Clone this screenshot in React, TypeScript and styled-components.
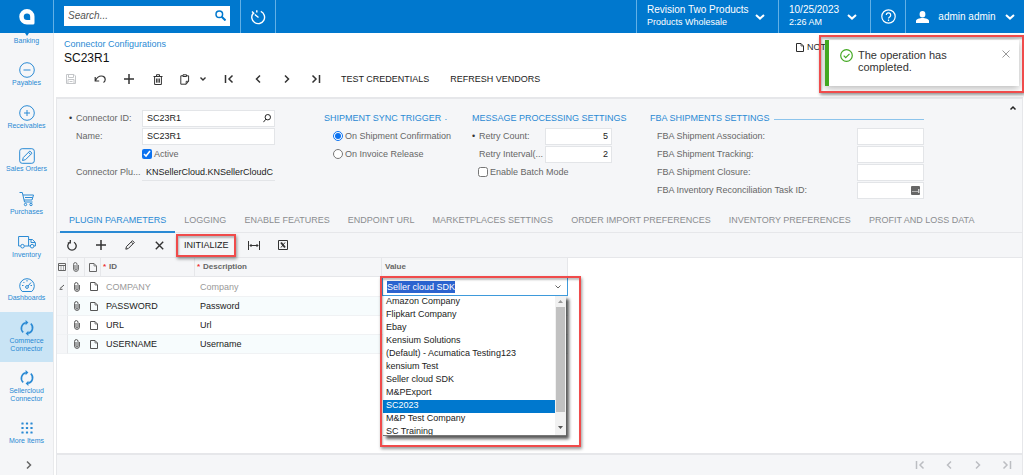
import React, { useEffect, useRef } from 'react';
import styled, { createGlobalStyle, css } from 'styled-components';

const blue = '#0078ce';
const linkBlue = '#2a8ad4';
const panelBg = '#f5f6f8';
const line = '#e6e7ea';

const GlobalStyle = createGlobalStyle`
  *, *::before, *::after { box-sizing: border-box; }
  body {
    margin: 0;
    background: #fff;
    color: #2b2b2b;
    font-family: "Liberation Sans", Arial, sans-serif;
    font-size: 9px;
    line-height: 12px;
  }
  button, input, select { font: inherit; color: inherit; margin: 0; }
  button { background: none; border: 0; padding: 0; cursor: pointer; }
  a { text-decoration: none; color: inherit; }
  h1, h2 { margin: 0; font-weight: 400; }
`;

/* ---------- icons ---------- */

const Svg = styled.svg<{ $w?: number }>`
  display: block;
  flex: none;
  fill: none;
  stroke: currentColor;
  stroke-width: ${(p) => p.$w ?? 1};
`;

type IconProps = { w: number; h?: number; sw?: number; children: React.ReactNode };
const Icon = ({ w, h = w, sw, children }: IconProps) => (
  <Svg width={w} height={h} viewBox={`0 0 ${w} ${h}`} $w={sw} aria-hidden="true">
    {children}
  </Svg>
);

const Down = () => <Icon w={10} h={6} sw={2}><path d="M1 1l4 3.6L9 1" /></Icon>;
const SmallDown = () => <Icon w={8} h={6} sw={1.4}><path d="M1.5 1.5L4 4l2.500-2.500" /></Icon>;
const Plus = () => <Icon w={12} sw={1.5}><path d="M6 1v10M1 6h10" /></Icon>;
const First = () => <Icon w={10} sw={1.5}><path d="M1.500 1v8M8.500 1.500L5 5l3.500 3.500" /></Icon>;
const Prev = () => <Icon w={10} sw={1.5}><path d="M7 1.500L3.500 5 7 8.500" /></Icon>;
const Next = () => <Icon w={10} sw={1.5}><path d="M3 1.500L6.500 5 3 8.500" /></Icon>;
const Last = () => <Icon w={10} sw={1.5}><path d="M8.500 1v8M1.500 1.500L5 5 1.500 8.500" /></Icon>;
const Page = () => <Icon w={8} h={9}><path d="M.5.5h4.500l2.500 2.500v5.500h-7z" /><path d="M5 .5V3h2.500" strokeWidth=".7" /></Icon>;
const Clip = () => (
  <Icon w={6} h={10}><path d="M2 3v4a1 1 0 0 0 2 0V2.300a1.700 1.700 0 0 0-3.400 0V7a2.400 2.400 0 0 0 4.800 0V3" /></Icon>
);
const Sync = () => (
  <Icon w={16} sw={1.6}>
    <path d="M4.200 12.300A5.600 5.600 0 0 1 6.800 2.700M11.800 3.700a5.600 5.600 0 0 1-2.600 9.600" />
    <path d="M6.600 0v5.200L9.400 2.600zM9.400 10.800V16l-2.800-2.600z" fill="currentColor" stroke="none" />
  </Icon>
);

/* ---------- top bar ---------- */

const Shell = styled.div`
  min-height: 100vh;
  display: flex;
  flex-direction: column;
`;

const TopBar = styled.header`
  display: flex;
  height: 33px;
  flex: none;
  background: ${blue};
  color: #fff;
`;

const divider = css`border-right: 1px solid #62b0e6;`;

const LogoLink = styled.a`
  ${divider}
  width: 54px;
  display: flex;
  align-items: center;
  justify-content: center;
`;

const SearchBox = styled.form`
  ${divider}
  width: 187px;
  display: flex;
  align-items: center;
  padding: 0 10px 2px;
`;

const SearchField = styled.div`
  flex: 1;
  height: 20px;
  display: flex;
  align-items: center;
  gap: 4px;
  padding: 0 4px 0 0;
  background: #fff;
  color: ${blue};
`;

const SearchInput = styled.input`
  flex: 1;
  min-width: 0;
  border: 0;
  outline: 0;
  padding: 0 0 0 4px;
  background: transparent;
  font-size: 10px;
  font-style: italic;
  &::placeholder { color: #555; opacity: 1; }
`;

const TopButton = styled.button<{ $width: number }>`
  width: ${(p) => p.$width}px;
  ${divider}
  display: flex;
  align-items: center;
  justify-content: center;
`;

const TopSpacer = styled.div`
  ${divider}
  flex: 1;
`;

const TopMenu = styled.button<{ $width: number; $last?: boolean }>`
  width: ${(p) => p.$width}px;
  ${(p) => !p.$last && divider}
  display: flex;
  align-items: center;
  justify-content: space-between;
  padding: 0 ${(p) => (p.$last ? 9 : 13)}px 0 10px;
  text-align: left;
  white-space: nowrap;
`;

const MenuMain = styled.span`
  display: block;
  font-size: 10px;
`;

const MenuSub = styled.span`
  display: block;
  font-size: 9px;
  padding-bottom: 2px;
`;

/* ---------- side navigation ---------- */

const Body = styled.div`
  flex: 1;
  display: flex;
`;

const SideNav = styled.nav`
  width: 54px;
  flex: none;
  display: flex;
  flex-direction: column;
  background: ${panelBg};
  border-right: 1px solid #e9eaec;
  color: ${linkBlue};
`;

const NavItem = styled.a<{ $active?: boolean; $clipped?: boolean }>`
  min-height: ${(p) => (p.$clipped ? 21 : 43)}px;
  padding: ${(p) => (p.$clipped ? '0' : '8px 5px 9px')};
  display: flex;
  flex-direction: column;
  align-items: center;
  gap: 1px;
  background: ${(p) => (p.$active ? '#c9e4f5' : 'transparent')};
  font-size: 7px;
  line-height: 8px;
  text-align: center;
`;

const NavExpand = styled.button`
  flex: 1;
  display: flex;
  align-items: center;
  justify-content: center;
  padding-left: 4px;
  color: #666;
`;

/* ---------- page ---------- */

const Main = styled.main`
  flex: 1;
  min-width: 0;
  display: flex;
  flex-direction: column;
  padding: 0 1px 0 2px;
`;

const PageHead = styled.div`
  display: flex;
  justify-content: space-between;
  padding: 5px 185px 0 8px;
`;

const Crumb = styled.a`
  display: block;
  color: ${linkBlue};
`;

const PageTitle = styled.h1`
  font-size: 12px;
  line-height: 16px;
  color: #111;
`;

const NoteLink = styled.button`
  display: flex;
  align-items: center;
  align-self: flex-start;
  gap: 3px;
  padding-top: 3px;
`;

const Toolbar = styled.div<{ $grid?: boolean }>`
  display: flex;
  align-items: center;
  gap: 15px;
  height: ${(p) => (p.$grid ? 25 : 26)}px;
  margin-bottom: ${(p) => (p.$grid ? 0 : 5)}px;
  padding-left: 8px;
  ${(p) => p.$grid && css`border-bottom: 1px solid ${line};`}
`;

const ToolButton = styled.button`
  min-width: 14px;
  height: 20px;
  display: flex;
  align-items: center;
  justify-content: center;
  gap: 9px;
  color: #333;
  &:disabled { color: #c4c6c9; cursor: default; }
`;

const TextButton = styled.button`
  position: relative;
  padding: 0 3px;
  height: 20px;
  color: #222;
  white-space: nowrap;
`;

const Highlight = styled.span<{ $inset: string }>`
  position: absolute;
  inset: ${(p) => p.$inset};
  border: 2px solid #f04b4b;
  box-shadow: 1px 2px 3px rgba(0, 0, 0, 0.4), inset 1px 2px 2px rgba(0, 0, 0, 0.25);
  pointer-events: none;
  z-index: 3;
`;

const Panel = styled.section`
  flex: 1;
  display: flex;
  flex-direction: column;
  border: solid ${line};
  border-width: 2px 1px 0 1px;
  background: ${panelBg};
`;

/* ---------- form ---------- */

const FormArea = styled.form`
  display: flex;
  justify-content: space-between;
  align-items: flex-start;
  padding: 0 5px 10px 12px;
`;

const FormColumns = styled.div`
  display: grid;
  grid-template-columns: 230px 123px 153px 274px;
  column-gap: 25px;
  padding-top: 10px;
  color: #666;
`;

const Row = styled.div<{ $indent?: number; $end?: number }>`
  height: 18px;
  display: flex;
  align-items: center;
  padding: 0 ${(p) => p.$end ?? 0}px 0 ${(p) => p.$indent ?? 0}px;
  white-space: nowrap;
`;

const GroupTitle = styled.h2`
  height: 18px;
  display: flex;
  align-items: center;
  gap: 4px;
  font-size: 9px;
  color: ${linkBlue};
  white-space: nowrap;
  &::after {
    content: '';
    flex: 1;
    height: 1px;
    margin-top: 2px;
    background: #8cc4ec;
  }
`;

const Label = styled.label<{ $required?: boolean }>`
  flex: 1;
  &::before {
    content: '${(p) => (p.$required ? '•' : '')}';
    display: inline-block;
    width: 7px;
    color: #333;
  }
`;

const Field = styled.div<{ $width: number; $plain?: boolean }>`
  width: ${(p) => p.$width}px;
  flex: none;
  height: 17px;
  display: flex;
  align-items: center;
  padding-right: ${(p) => (p.$plain ? 2 : 3)}px;
  border: solid #e3e5e8;
  border-width: ${(p) => (p.$plain ? '0 0 1px' : '1px')};
  background: ${(p) => (p.$plain ? 'transparent' : '#fff')};
  color: #222;
`;

const TextInput = styled.input`
  flex: 1;
  min-width: 0;
  height: 100%;
  border: 0;
  outline: 0;
  padding: 0 0 0 4px;
  background: transparent;
  text-align: ${(p) => (p.type === 'text' ? 'left' : 'right')};
`;

const Check = styled.label`
  display: flex;
  align-items: center;
  gap: 2px;
`;

const CheckInput = styled.input`
  width: 10px;
  height: 10px;
  accent-color: #0b72f0;
`;

const Collapse = styled.button`
  padding: 6px 0;
  color: #222;
`;

/* ---------- tabs ---------- */

const Tabs = styled.div`
  display: flex;
  height: 24px;
  padding-left: 3px;
  border-bottom: 1px solid ${line};
`;

const Tab = styled.button<{ $active?: boolean }>`
  padding: 0 9px;
  margin-bottom: -1px;
  border-bottom: 2px solid ${(p) => (p.$active ? linkBlue : 'transparent')};
  color: ${(p) => (p.$active ? linkBlue : '#8b8d90')};
  white-space: nowrap;
`;

/* ---------- grid ---------- */

const GridArea = styled.div`
  flex: 1;
  background: #fff;
`;

const Grid = styled.table`
  width: 511px;
  table-layout: fixed;
  border-collapse: separate;
  border-spacing: 0;
`;

const HeadCell = styled.th<{ $pad?: number; $required?: boolean }>`
  height: 19px;
  padding: 0 0 0 ${(p) => p.$pad ?? 4}px;
  border: solid ${line};
  border-width: 0 1px 1px 0;
  background: ${panelBg};
  color: #666;
  font-size: 8px;
  text-align: left;
  white-space: nowrap;
  ${(p) => p.$required && css`
    &::before { content: '*'; display: inline-block; width: 6px; color: #e33; }
  `}
`;

const Cell = styled.td<{ $pad?: number; $selector?: boolean; $alt?: boolean; $muted?: boolean }>`
  height: 19px;
  padding: 0 0 0 ${(p) => p.$pad ?? 5}px;
  border-bottom: 1px solid #f0f2f4;
  ${(p) => p.$selector && css`border-right: 1px solid ${line};`}
  background: ${(p) => (p.$selector ? panelBg : p.$alt ? '#f7fcfd' : '#fff')};
  color: ${(p) => (p.$muted ? '#999' : '#222')};
  & > svg { color: #555; }
`;

const Combo = styled.div`
  position: relative;
  height: 19px;
  display: flex;
  align-items: center;
  padding-right: 5px;
  border: 1px solid #3f9bdc;
  background: #fff;
  color: #666;
`;

const ComboInput = styled.input`
  flex: 1;
  min-width: 0;
  border: 0;
  outline: 0;
  padding: 0 0 0 4px;
  background: transparent;
  caret-color: transparent;
  &::selection { background: #2b63cf; color: #fff; }
`;

const Menu = styled.div`
  position: absolute;
  top: 18px;
  left: 0;
  right: 1px;
  height: 140px;
  display: flex;
  overflow: hidden;
  border-bottom: 1px solid #777;
  background: #fff;
  z-index: 2;
`;

const MenuShadow = styled.div`
  position: absolute;
  top: 20px;
  left: 2px;
  right: 1px;
  height: 138px;
  box-shadow: 2px 2px 3px 1px rgba(0, 0, 0, 0.65);
`;

const MenuList = styled.select`
  flex: 1;
  min-width: 0;
  border: 0;
  outline: 0;
  padding: 0;
  border-radius: 0;
  overflow: hidden;
  background: #fff;
  color: #222;
`;

const Option = styled.option`
  height: 13px;
  min-height: 13px;
  padding: 0 0 0 3px;
  line-height: 13px;
  &:checked {
    background: ${blue} linear-gradient(${blue}, ${blue});
    color: #fff;
    -webkit-text-fill-color: #fff;
  }
`;

const ScrollTrack = styled.div`
  width: 11px;
  display: flex;
  flex-direction: column;
  align-items: center;
  justify-content: space-between;
  padding: 4px 1px 6px;
  background: #f1f1f1;
  color: #555;
`;

const ScrollThumb = styled.div`
  width: 9px;
  height: 105px;
  margin-bottom: auto;
  margin-top: 4px;
  background: #c1c1c1;
`;

const Pager = styled.footer`
  height: 22px;
  display: flex;
  align-items: center;
  justify-content: flex-end;
  gap: 19px;
  padding-right: 10px;
  border-top: 2px solid ${line};
  & button { color: #bcbec2; }
`;

/* ---------- toast ---------- */

const ToastFrame = styled.div`
  position: absolute;
  top: 35px;
  right: 0;
  width: 205px;
  padding: 5px 5px 7px 6px;
  z-index: 5;
`;

const Toast = styled.div`
  display: flex;
  align-items: flex-start;
  gap: 5px;
  min-height: 46px;
  padding: 9px 9px 0 11px;
  border-left: 4px solid #43a822;
  background: #fff;
  box-shadow: 0 2px 8px rgba(0, 0, 0, 0.3);
  color: #333;
`;

const ToastText = styled.p`
  flex: 1;
  margin: 0;
  max-width: 100px;
  font-size: 11px;
  line-height: 12px;
`;

const ToastClose = styled.button`
  margin-left: auto;
  padding-top: 1px;
  color: #999;
`;

/* ---------- data ---------- */

const navItems: { label: string; icon: React.ReactNode; active?: boolean }[] = [
  { label: 'Payables', icon: <Icon w={16}><circle cx="8" cy="8" r="7.300" /><path d="M4.500 8h7" /></Icon> },
  { label: 'Receivables', icon: <Icon w={16}><circle cx="8" cy="8" r="7.300" /><path d="M5 8h6M8 5v6" /></Icon> },
  {
    label: 'Sales Orders',
    icon: (
      <Icon w={16}>
        <rect x=".7" y=".7" width="14.600" height="14.600" rx="2.500" />
        <path d="M3.500 12.500l.8-3 6.500-6.500 2.200 2.200-6.500 6.500zM9.500 4.300l2.200 2.200" />
      </Icon>
    ),
  },
  {
    label: 'Purchases',
    icon: (
      <Icon w={16}>
        <path d="M.5 1.500h2.800l2.200 9.500h8M4 4h10.500l-1.500 5H5M6 6.500h7.500" />
        <circle cx="6.500" cy="13.500" r="1.200" /><circle cx="12" cy="13.500" r="1.200" />
      </Icon>
    ),
  },
  {
    label: 'Inventory',
    icon: (
      <Icon w={18} h={16}>
        <path d="M2.500 12H.6V2.500h10V12H6.500M10.600 5.500h3.900l2.900 3V12h-1.500M12.300 12h-1.700M13 5.500v3h4" />
        <circle cx="4.500" cy="12.200" r="1.800" /><circle cx="14.100" cy="12.200" r="1.800" />
      </Icon>
    ),
  },
  {
    label: 'Dashboards',
    icon: (
      <Icon w={16}>
        <path d="M3.200 14.500a7.300 7.300 0 1 1 9.600 0zM3 8.500h1.500M8 3v1.500M4.400 5l1 1M11.500 8.500H13" />
        <circle cx="8" cy="10" r="1.400" /><path d="M9 9l3-3.500" />
      </Icon>
    ),
  },
  { label: 'Commerce Connector', icon: <Sync />, active: true },
  { label: 'Sellercloud Connector', icon: <Sync /> },
  {
    label: 'More Items',
    icon: (
      <Icon w={16}>
        {[3.5, 8, 12.5].map((y) => [3.5, 8, 12.5].map((x) => (
          <rect key={`${x}-${y}`} x={x - 1.1} y={y - 1.1} width="2.200" height="2.200" rx=".5" fill="currentColor" stroke="none" />
        )))}
      </Icon>
    ),
  },
];

const tabs = [
  'PLUGIN PARAMETERS', 'LOGGING', 'ENABLE FEATURES', 'ENDPOINT URL', 'MARKETPLACES SETTINGS',
  'ORDER IMPORT PREFERENCES', 'INVENTORY PREFERENCES', 'PROFIT AND LOSS DATA',
];

const rows = [
  ['COMPANY', 'Company'],
  ['PASSWORD', 'Password'],
  ['URL', 'Url'],
  ['USERNAME', 'Username'],
];

const companies = [
  'Amazon Company', 'Flipkart Company', 'Ebay', 'Kensium Solutions', '(Default) - Acumatica Testing123',
  'kensium Test', 'Seller cloud SDK', 'M&PExport', 'SC2023', 'M&P Test Company', 'SC Training',
];

const fbaFields = [
  'FBA Shipment Association:', 'FBA Shipment Tracking:', 'FBA Shipment Closure:', 'FBA Inventory Reconciliation Task ID:',
];

const pagerButtons = [
  { name: 'First page', icon: <First /> },
  { name: 'Previous page', icon: <Prev /> },
  { name: 'Next page', icon: <Next /> },
  { name: 'Last page', icon: <Last /> },
];

/* ---------- sections ---------- */

const Header = () => (
  <TopBar>
    <LogoLink href="#" aria-label="Home">
      <Icon w={16}>
        <path d="M8 0a7.500 7.500 0 0 1 7.500 7.500v6.500a1.500 1.500 0 0 1-1.500 1.500H8A7.750 7.750 0 0 1 8 0z" fill="#fff" stroke="none" />
        <path d="M8 4.500a3.200 3.200 0 0 1 3.200 3.200V11H8a3.250 3.250 0 0 1 0-6.500z" fill={blue} stroke="none" />
      </Icon>
    </LogoLink>
    <SearchBox>
      <SearchField>
        <SearchInput type="search" placeholder="Search..." aria-label="Search" />
        <button type="button" aria-label="Run search">
          <Icon w={11} sw={1.5}><circle cx="4.300" cy="4.300" r="3.300" /><path d="M6.700 6.700l3.800 3.800" strokeWidth="2" /></Icon>
        </button>
      </SearchField>
    </SearchBox>
    <TopButton $width={35} aria-label="Recent">
      <Icon w={16} sw={1.4}><path d="M10.800 2.400A6.400 6.400 0 1 1 3.200 4.200M2 2.500l2.200 2.200M6.800 1.200v2.200M4.800 5.500L8.500 8.500" /></Icon>
    </TopButton>
    <TopSpacer />
    <TopMenu $width={142}>
      <span><MenuMain>Revision Two Products</MenuMain><MenuSub>Products Wholesale</MenuSub></span>
      <Down />
    </TopMenu>
    <TopMenu $width={92}>
      <span><MenuMain>10/25/2023</MenuMain><MenuSub>2:26 AM</MenuSub></span>
      <Down />
    </TopMenu>
    <TopButton $width={35} aria-label="Help">
      <Icon w={15} sw={1.2}>
        <circle cx="7.500" cy="7.500" r="6.700" />
        <path d="M5.300 6a2.200 2.200 0 1 1 3.400 1.900c-.8.5-1.200.8-1.200 1.700M7.500 10.600v1.400" />
      </Icon>
    </TopButton>
    <TopMenu $width={118} $last>
      <Icon w={13} h={12}>
        <path d="M6.500 0a2.900 3.200 0 0 1 0 6.400A2.900 3.200 0 0 1 6.500 0zM0 12V10c0-1.800 3.500-3 6.500-3S13 8.200 13 10v2z" fill="#fff" stroke="none" />
      </Icon>
      <MenuMain>admin admin</MenuMain>
      <Down />
    </TopMenu>
  </TopBar>
);

const Navigation = () => (
  <SideNav aria-label="Workspaces">
    <NavItem href="#" $clipped>
      <Icon w={4} h={3}><path d="M0 0h4L2 3z" fill={blue} stroke="none" /></Icon>
      Banking
    </NavItem>
    {navItems.map((n) => (
      <NavItem key={n.label} href="#" $active={n.active}>
        {n.icon}
        {n.label}
      </NavItem>
    ))}
    <NavExpand aria-label="Expand menu"><Next /></NavExpand>
  </SideNav>
);

const MainToolbar = () => (
  <Toolbar>
    <ToolButton disabled aria-label="Save">
      <Icon w={10}><path d="M.5.5h7.500l1.500 1.500v7.500h-9zM2.500.5v3h5v-3M2 9.500v-4h6v4M3.500 7.500h3" /></Icon>
    </ToolButton>
    <ToolButton aria-label="Undo">
      <Icon w={12} h={10} sw={1.2}><path d="M1.200 3v4h4M1.500 6.500C3 3.500 5 2 7.200 2c2.500 0 4 1.500 4 3.500 0 1.300-.6 2.300-1.700 3" /></Icon>
    </ToolButton>
    <ToolButton aria-label="Add"><Plus /></ToolButton>
    <ToolButton aria-label="Delete">
      <Icon w={10} h={11}><path d="M.5 2.500h9M3.500 2.300V.7h3v1.600M1.600 2.500v8h6.800v-8M3.600 4.500v4.200M5 4.500v4.200M6.400 4.500v4.200" /></Icon>
    </ToolButton>
    <ToolButton aria-label="Copy and paste">
      <Icon w={10} h={11}><path d="M3 1.800H.8v8.400h5.400l2.400-2.900V1.800H6.500M3 .8h3.500v1.700H3zM8.600 7.300H6.200v2.900" /></Icon>
      <SmallDown />
    </ToolButton>
    {pagerButtons.map((b) => <ToolButton key={b.name} aria-label={b.name}>{b.icon}</ToolButton>)}
    <TextButton>TEST CREDENTIALS</TextButton>
    <TextButton>REFRESH VENDORS</TextButton>
  </Toolbar>
);

const SettingsForm = () => (
  <FormArea>
    <FormColumns>
      <div>
        <Row $end={24}>
          <Label htmlFor="cid" $required>Connector ID:</Label>
          <Field $width={133}>
            <TextInput id="cid" type="text" defaultValue="SC23R1" />
            <button type="button" aria-label="Look up connector">
              <Icon w={8} h={9}><circle cx="4.800" cy="3.200" r="2.700" /><path d="M2.900 5.200L.4 8.200" /></Icon>
            </button>
          </Field>
        </Row>
        <Row $end={24}>
          <Label htmlFor="cname">Name:</Label>
          <Field $width={133}><TextInput id="cname" type="text" defaultValue="SC23R1" /></Field>
        </Row>
        <Row $indent={73}>
          <Check><CheckInput type="checkbox" defaultChecked />Active</Check>
        </Row>
        <Row $end={24}>
          <Label htmlFor="plug">Connector Plu...</Label>
          <Field $width={133} $plain>
            <TextInput id="plug" type="text" readOnly value="KNSellerCloud.KNSellerCloudConnector" />
          </Field>
        </Row>
      </div>
      <div>
        <GroupTitle>SHIPMENT SYNC TRIGGER</GroupTitle>
        <Row $indent={9}>
          <Check><CheckInput type="radio" name="sync" defaultChecked />On Shipment Confirmation</Check>
        </Row>
        <Row $indent={9}>
          <Check><CheckInput type="radio" name="sync" />On Invoice Release</Check>
        </Row>
      </div>
      <div>
        <GroupTitle>MESSAGE PROCESSING SETTINGS</GroupTitle>
        <Row $end={13}>
          <Label htmlFor="retry" $required>Retry Count:</Label>
          <Field $width={67}><TextInput id="retry" inputMode="numeric" defaultValue="5" /></Field>
        </Row>
        <Row $end={13}>
          <Label htmlFor="interval">Retry Interval(...</Label>
          <Field $width={67}><TextInput id="interval" inputMode="numeric" defaultValue="2" /></Field>
        </Row>
        <Row $indent={6}>
          <Check><CheckInput type="checkbox" />Enable Batch Mode</Check>
        </Row>
      </div>
      <div>
        <GroupTitle>FBA SHIPMENTS SETTINGS</GroupTitle>
        {fbaFields.map((f, i) => (
          <Row key={f}>
            <Label htmlFor={`fba${i}`}>{f}</Label>
            <Field $width={67}>
              <TextInput id={`fba${i}`} type="text" />
              {i === 3 && (
                <Icon w={9}>
                  <rect width="9" height="9" rx="1" fill="#666" stroke="none" />
                  <path d="M1.500 5.500h1M3.500 5.500h1M5.500 5.500h1M7.800 3v4" stroke="#fff" />
                </Icon>
              )}
            </Field>
          </Row>
        ))}
      </div>
    </FormColumns>
    <Collapse type="button" aria-label="Collapse form">
      <Icon w={8} h={6} sw={1.5}><path d="M1.500 4.500L4 2l2.500 2.500" /></Icon>
    </Collapse>
  </FormArea>
);

const CompanyPicker = () => {
  const input = useRef<HTMLInputElement>(null);
  useEffect(() => {
    input.current?.focus();
    input.current?.select();
  }, []);
  return (
    <Combo>
      <ComboInput ref={input} role="combobox" aria-expanded="true" aria-controls="companies" aria-label="Value" defaultValue="Seller cloud SDK" />
      <button type="button" aria-label="Toggle list"><Icon w={8} h={6}><path d="M1.500 1.500L4 4l2.500-2.500" /></Icon></button>
      <MenuShadow />
      <Menu>
        <MenuList id="companies" size={11} defaultValue="SC2023" aria-label="Companies">
          {companies.map((c) => <Option key={c} value={c}>{c}</Option>)}
        </MenuList>
        <ScrollTrack>
          <Icon w={5} h={3}><path d="M0 3h5L2.500 0z" fill="#999" stroke="none" /></Icon>
          <ScrollThumb />
          <Icon w={5} h={3}><path d="M0 0h5L2.500 3z" fill="currentColor" stroke="none" /></Icon>
        </ScrollTrack>
      </Menu>
      <Highlight $inset="-2px -14px -152px -3px" />
    </Combo>
  );
};

const ParameterGrid = () => (
  <Grid>
    <colgroup>
      {[11, 17, 16, 94, 187, 186].map((w, i) => <col key={i} width={w} />)}
    </colgroup>
    <thead>
      <tr>
        <HeadCell $pad={1} aria-label="Grid settings">
          <Icon w={8}><path d="M.5.5h7v7h-7zM.5 2.500h7M2.500 4h1M5 4h1M2.500 6h1M5 6h1" /></Icon>
        </HeadCell>
        <HeadCell $pad={5} aria-label="Files"><Clip /></HeadCell>
        <HeadCell $pad={4} aria-label="Notes"><Page /></HeadCell>
        <HeadCell $pad={2} $required>ID</HeadCell>
        <HeadCell $pad={2} $required>Description</HeadCell>
        <HeadCell $pad={3}>Value</HeadCell>
      </tr>
    </thead>
    <tbody>
      {rows.map(([id, description], i) => (
        <tr key={id}>
          <Cell $selector $pad={2}>
            {i === 0 && <Icon w={6}><path d="M1 4.500L5 1M.5 5.300h3" /></Icon>}
          </Cell>
          <Cell $alt={i % 2 === 1} $pad={6}><Clip /></Cell>
          <Cell $alt={i % 2 === 1}><Page /></Cell>
          <Cell $alt={i % 2 === 1} $muted={i === 0}>{id}</Cell>
          <Cell $alt={i % 2 === 1} $muted={i === 0}>{description}</Cell>
          <Cell $alt={i % 2 === 1} $pad={i === 0 ? 0 : 5}>{i === 0 && <CompanyPicker />}</Cell>
        </tr>
      ))}
    </tbody>
  </Grid>
);

export default function App() {
  return (
    <Shell>
      <GlobalStyle />
      <Header />
      <Body>
        <Navigation />
        <Main>
          <PageHead>
            <div>
              <Crumb href="#">Connector Configurations</Crumb>
              <PageTitle>SC23R1</PageTitle>
            </div>
            <NoteLink><Page />NOTES</NoteLink>
          </PageHead>
          <MainToolbar />
          <Panel>
            <SettingsForm />
            <Tabs role="tablist">
              {tabs.map((t, i) => <Tab key={t} role="tab" aria-selected={i === 0} $active={i === 0}>{t}</Tab>)}
            </Tabs>
            <Toolbar $grid>
              <ToolButton aria-label="Refresh">
                <Icon w={10} h={11} sw={1.3}><path d="M3 2.300A4.200 4.200 0 1 0 7 2.300M3.300 0v2.800H.8" /></Icon>
              </ToolButton>
              <ToolButton aria-label="Add row"><Plus /></ToolButton>
              <ToolButton aria-label="Edit row">
                <Icon w={10}><path d="M.8 9.200l.7-2.700L7.500.7l1.800 1.800-6 6zM6.300 2l1.700 1.700" /></Icon>
              </ToolButton>
              <ToolButton aria-label="Delete row"><Icon w={9} sw={1.4}><path d="M.8.8l7.400 7.400M8.200.8L.8 8.200" /></Icon></ToolButton>
              <TextButton>INITIALIZE<Highlight $inset="-1px -4px -2px -5px" /></TextButton>
              <ToolButton aria-label="Fit to screen">
                <Icon w={12} h={9}><path d="M.5 0v9M11.500 0v9M2 4.500h8M3.500 3L2 4.500 3.500 6M8.500 3L10 4.500 8.500 6" /></Icon>
              </ToolButton>
              <ToolButton aria-label="Export to Excel">
                <Icon w={10}><path d="M.5.5h9v9h-9z" /><path d="M3 2.500l4 5" strokeWidth="2" /><path d="M7 2.500l-4 5" /></Icon>
              </ToolButton>
            </Toolbar>
            <GridArea><ParameterGrid /></GridArea>
            <Pager>
              {pagerButtons.map((b) => <button key={b.name} aria-label={b.name}>{b.icon}</button>)}
            </Pager>
          </Panel>
        </Main>
      </Body>
      <ToastFrame role="status">
        <Toast>
          <Icon w={13} sw={1.2}><circle cx="6.500" cy="6.500" r="5.800" stroke="#43a822" /><path d="M3.700 6.700l2 2 3.800-3.800" stroke="#43a822" /></Icon>
          <ToastText>The operation has completed.</ToastText>
          <ToastClose aria-label="Close"><Icon w={8}><path d="M.5.5l7 7M7.500.5l-7 7" /></Icon></ToastClose>
        </Toast>
        <Highlight $inset="0" />
      </ToastFrame>
    </Shell>
  );
}
